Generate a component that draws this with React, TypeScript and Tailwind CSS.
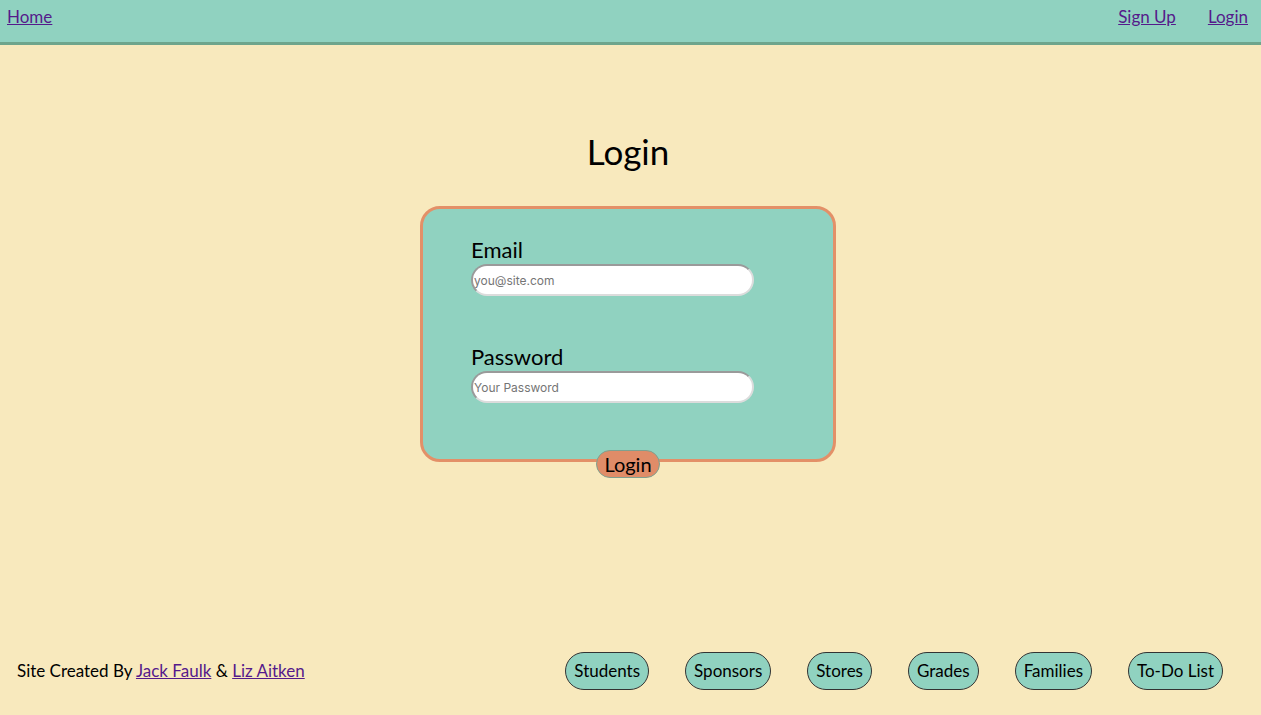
export default function App() {
  const navItems = ['Students', 'Sponsors', 'Stores', 'Grades', 'Families', 'To-Do List']

  return (
    <div
      className="min-h-[715px] flex flex-col bg-[#f8e9bd] text-black"
      style={{ fontFamily: '"Lato", "Open Sans", sans-serif' }}
    >
      {/* Barra superior */}
      <header className="h-[45px] bg-[#90d2c0] border-b-[3px] border-[#6ea58c] flex items-start justify-between px-[7px] pt-[4px]">
        <a href="#" className="text-[17px] text-[#551a8b] underline">
          Home
        </a>
        <nav className="flex gap-[32px] pr-[6px]">
          <a href="#" className="text-[17px] text-[#551a8b] underline">
            Sign Up
          </a>
          <a href="#" className="text-[17px] text-[#551a8b] underline">
            Login
          </a>
        </nav>
      </header>

      <main className="flex flex-col items-center pr-[5px]">
        <h1 className="mt-[84px] text-[35px] leading-[44px]">Login</h1>

        <form className="mt-[33px] w-[416px] h-[256px] rounded-[20px] border-[3px] border-[#e39068] bg-[#90d2c0] pl-[48px] pt-[28px]">
          <Campo label="Email" placeholder="you@site.com" type="email" />
          <div className="h-[48px]" />
          <Campo label="Password" placeholder="Your Password" type="password" />
        </form>
        <button
          type="button"
          className="-mt-[12px] h-[28px] px-[7px] rounded-full bg-[#e08c68] border border-[#7fa08f] text-[20px] leading-none"
        >
          Login
        </button>
      </main>

      <footer className="mt-auto h-[80px] flex items-center justify-between pl-[17px] pr-[38px] pb-[8px]">
        <p className="text-[17px]">
          Site Created By{' '}
          <a href="#" className="text-[#551a8b] underline">
            Jack Faulk
          </a>{' '}
          &amp;{' '}
          <a href="#" className="text-[#551a8b] underline">
            Liz Aitken
          </a>
        </p>
        <div className="flex gap-[36px]">
          {navItems.map((n) => (
            <button
              key={n}
              type="button"
              className="h-[38px] px-[8px] rounded-full border border-[#333] bg-[#90d2c0] text-[17px]"
            >
              {n}
            </button>
          ))}
        </div>
      </footer>
    </div>
  )
}

function Campo({
  label,
  placeholder,
  type,
}: {
  label: string
  placeholder: string
  type: string
}) {
  return (
    <div className="flex flex-col">
      <label className="text-[22px] leading-[26px]">{label}</label>
      <input
        type={type}
        placeholder={placeholder}
        className="mt-[1px] w-[283px] h-[32px] rounded-full bg-white pl-[1px] pr-[2px] text-[12px] border-2 border-t-[#9a9a9a] border-l-[#9a9a9a] border-r-[#dcdcdc] border-b-[#dcdcdc] placeholder:text-[#757575] outline-none"
        style={{ fontFamily: '"Inter", sans-serif' }}
      />
    </div>
  )
}
